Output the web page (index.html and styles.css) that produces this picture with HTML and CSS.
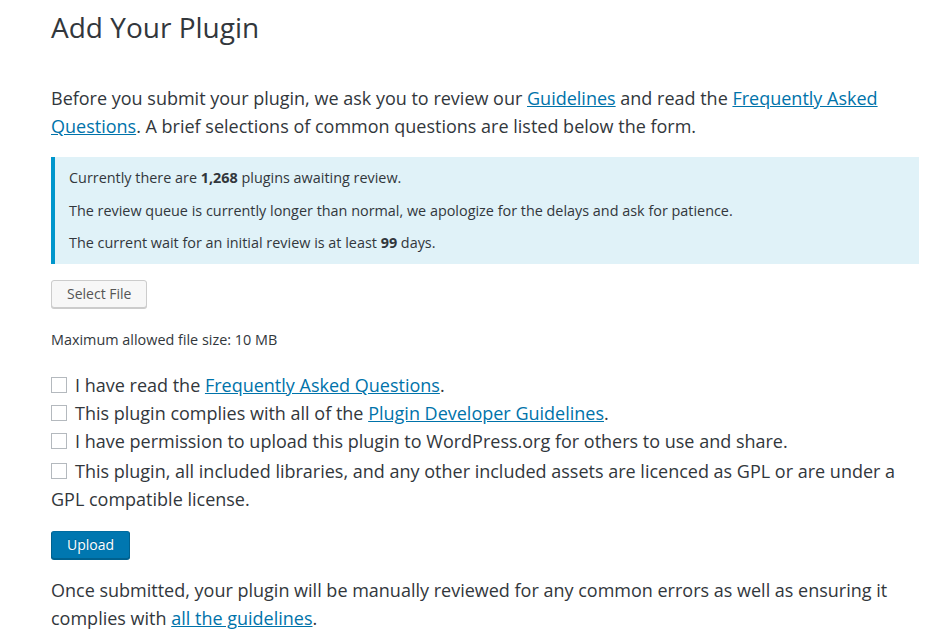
FILE: index.html
```html
<!DOCTYPE html>
<html>
<head>
<meta charset="utf-8">
<link rel="stylesheet" href="styles.css">
</head>
<body>
<main class="page">
  <h1 class="title">Add Your Plugin</h1>
  <p class="lead">Before you submit your plugin, we ask you to review our <a href="#">Guidelines</a> and read the <a href="#">Frequently Asked Questions</a>. A brief selections of common questions are listed below the form.</p>
  <div class="notice">
    <p>Currently there are <strong>1,268</strong> plugins awaiting review.</p>
    <p>The review queue is currently longer than normal, we apologize for the delays and ask for patience.</p>
    <p>The current wait for an initial review is at least <strong>99</strong> days.</p>
  </div>
  <div class="file-row"><button class="btn">Select File</button></div>
  <p class="small">Maximum allowed file size: 10 MB</p>
  <ul class="checks">
    <li><span class="box"></span>I have read the <a href="#">Frequently Asked Questions</a>.</li>
    <li><span class="box"></span>This plugin complies with all of the <a href="#">Plugin Developer Guidelines</a>.</li>
    <li><span class="box"></span>I have permission to upload this plugin to WordPress.org for others to use and share.</li>
    <li class="wide"><span class="box"></span>This plugin, all included libraries, and any other included assets are licenced as GPL or are under a GPL compatible license.</li>
  </ul>
  <div class="upload-row"><button class="btn primary">Upload</button></div>
  <p class="lead after">Once submitted, your plugin will be manually reviewed for any common errors as well as ensuring it complies with <a href="#">all the guidelines</a>.</p>
</main>
</body>
</html>
```
FILE: styles.css
```css
html, body { margin: 0; padding: 0; background: #fff; }
body { font-family: "Open Sans", sans-serif; color: #32373c; }
.page { width: 868px; padding: 0 0 0 51px; }
.title { font-size: 28px; font-weight: 400; margin: 0; padding-top: 8px; line-height: 38px; }
.lead { font-size: 18px; line-height: 28px; margin: 38px 0 0; }
.lead a, .checks a { color: #0073aa; text-decoration: underline; }
.notice { background: #e0f2f8; border-left: 4px solid #0096cc; margin-top: 17px; padding: 10px 14px; }
.notice p { font-size: 14.4px; line-height: 22px; margin: 0; }
.notice p + p { margin-top: 10.5px; }
.notice strong { font-weight: 700; }
.file-row { margin-top: 16px; }
.btn { font-family: "Open Sans", sans-serif; font-size: 14px; line-height: 24px; height: 28px; padding: 0 15px; border: 1px solid #ccc; border-radius: 3px; background: #f7f7f7; color: #555; box-shadow: 0 1px 0 #ccc; }
.btn.primary { background: #0077b0; border-color: #006ca0 #00618f #00618f; color: #fff; box-shadow: 0 1px 0 #00618f; text-shadow: 0 -1px 1px #00618f; }
.small { font-size: 14.4px; line-height: 20px; margin: 22px 0 0; }
.checks { list-style: none; margin: 21px 0 0; padding: 0; font-size: 18px; line-height: 28px; }
.checks li.wide { margin-top: 2px; }
.box { display: inline-block; width: 14px; height: 14px; border: 1px solid #b4b9be; background: #fff; margin: 0 8px 0 0; vertical-align: -1px; }
.upload-row { margin-top: 18px; }
.lead.after { margin-top: 17px; }
```
